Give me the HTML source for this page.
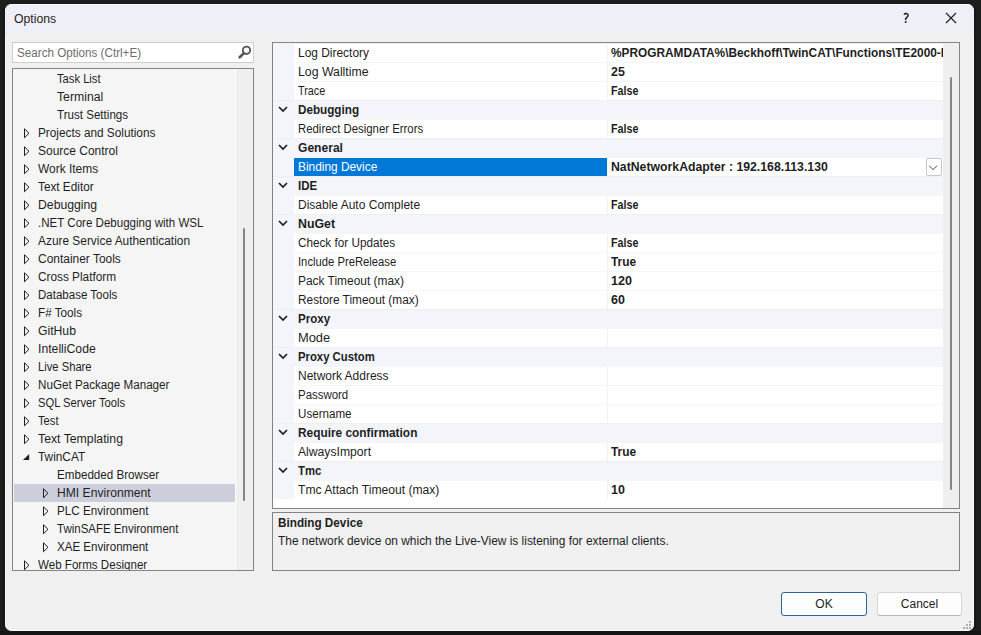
<!DOCTYPE html>
<html><head><meta charset="utf-8">
<style>
*{margin:0;padding:0;box-sizing:border-box}
html,body{width:981px;height:635px;overflow:hidden;background:#1c1d1d}
body{position:relative;font-family:"Liberation Sans",sans-serif;font-size:12px;color:#1e1e1e}
.a{position:absolute;white-space:nowrap}
.t{position:absolute;white-space:nowrap;line-height:18px;height:18px}
.tri{position:absolute}
.pr{position:absolute;white-space:nowrap;line-height:19px;height:19px}
b{font-weight:bold}
</style></head><body>

<div class="a" style="left:0;top:631px;width:981px;height:4px;background:#141414"></div>
<div class="a" style="left:3px;top:8px;width:2px;height:620px;background:#181818"></div>
<div class="a" style="left:974px;top:8px;width:2px;height:620px;background:#171717"></div>
<div class="a" style="left:5px;top:4px;width:969px;height:627px;border-radius:7px;background:#f0f0f0;overflow:hidden;box-shadow:inset 0 0 0 1px #fafafa">
<div class="a" style="left:0;top:0;width:969px;height:29px;background:#eff0f7"></div>
<div class="a" style="left:0;top:29px;width:969px;height:4px;background:linear-gradient(#eff0f5,#f0f0f0)"></div>
<div class="a" style="left:0;top:0;width:969px;height:1px;background:#f9f9fc"></div>
</div>
<div class="a" style="left:14px;top:12px;line-height:14px;transform:scaleX(1.0212);transform-origin:0 0;">Options</div>
<svg class="a" style="left:898px;top:9px" width="16" height="18"><path d="M6 5.6C6.6 4.7 7.5 4.4 8.4 4.5C9.7 4.7 10.3 5.8 10 6.9C9.7 8.1 7.7 8.7 7.6 10V11" stroke="#1a1a1a" stroke-width="1.45" fill="none"/><circle cx="7.7" cy="13" r="1" fill="#1a1a1a"/></svg>
<svg class="a" style="left:945px;top:12px" width="12" height="12"><path d="M1 1L11 11M11 1L1 11" stroke="#1a1a1a" stroke-width="1.1" fill="none"/></svg>
<div class="a" style="left:12px;top:42px;width:242px;height:21px;background:#fff;border:1px solid #cdcdcd"></div>
<div class="a" style="left:17px;top:46px;line-height:14px;color:#6d6d6d;transform:scaleX(0.9715);transform-origin:0 0;">Search Options (Ctrl+E)</div>
<svg class="a" style="left:236px;top:44px" width="16" height="16"><circle cx="10.5" cy="6.3" r="3.7" stroke="#555" stroke-width="1.9" fill="none"/><path d="M7.9 9.1L3.7 13.3" stroke="#555" stroke-width="2.7" stroke-linecap="round"/></svg>
<div class="a" style="left:12px;top:68px;width:242px;height:503px;background:#f5f5f5;border:1px solid #838383;overflow:hidden">
<div class="a" style="left:222px;top:0;width:1px;height:501px;background:#fcfcfc"></div>
<div class="a" style="left:223px;top:0;width:17px;height:501px;background:#efefef"></div>
<div class="a" style="left:230px;top:159px;width:2px;height:273px;background:#858585;border-radius:1px"></div>
<div class="a" style="left:1px;top:415px;width:221px;height:18px;background:#cccedb"></div>
<div class="t" style="left:44px;top:1px;transform:scaleX(0.9333);transform-origin:0 0;">Task List</div>
<div class="t" style="left:44px;top:19px;transform:scaleX(1.0202);transform-origin:0 0;">Terminal</div>
<div class="t" style="left:44px;top:37px;transform:scaleX(0.9658);transform-origin:0 0;">Trust Settings</div>
<div class="t" style="left:25px;top:55px;transform:scaleX(0.9831);transform-origin:0 0;">Projects and Solutions</div>
<svg class="tri" style="left:11px;top:59px" width="8" height="11"><path d="M0.5 0.8L0.5 9.7L5 5.25Z" stroke="#1e1e1e" stroke-width="1" fill="none"/></svg>
<div class="t" style="left:25px;top:73px;transform:scaleX(0.9979);transform-origin:0 0;">Source Control</div>
<svg class="tri" style="left:11px;top:77px" width="8" height="11"><path d="M0.5 0.8L0.5 9.7L5 5.25Z" stroke="#1e1e1e" stroke-width="1" fill="none"/></svg>
<div class="t" style="left:25px;top:91px;transform:scaleX(0.9951);transform-origin:0 0;">Work Items</div>
<svg class="tri" style="left:11px;top:95px" width="8" height="11"><path d="M0.5 0.8L0.5 9.7L5 5.25Z" stroke="#1e1e1e" stroke-width="1" fill="none"/></svg>
<div class="t" style="left:25px;top:109px;transform:scaleX(0.9811);transform-origin:0 0;">Text Editor</div>
<svg class="tri" style="left:11px;top:113px" width="8" height="11"><path d="M0.5 0.8L0.5 9.7L5 5.25Z" stroke="#1e1e1e" stroke-width="1" fill="none"/></svg>
<div class="t" style="left:25px;top:127px;transform:scaleX(1.0193);transform-origin:0 0;">Debugging</div>
<svg class="tri" style="left:11px;top:131px" width="8" height="11"><path d="M0.5 0.8L0.5 9.7L5 5.25Z" stroke="#1e1e1e" stroke-width="1" fill="none"/></svg>
<div class="t" style="left:25px;top:145px;transform:scaleX(0.9627);transform-origin:0 0;">.NET Core Debugging with WSL</div>
<svg class="tri" style="left:11px;top:149px" width="8" height="11"><path d="M0.5 0.8L0.5 9.7L5 5.25Z" stroke="#1e1e1e" stroke-width="1" fill="none"/></svg>
<div class="t" style="left:25px;top:163px;transform:scaleX(0.9908);transform-origin:0 0;">Azure Service Authentication</div>
<svg class="tri" style="left:11px;top:167px" width="8" height="11"><path d="M0.5 0.8L0.5 9.7L5 5.25Z" stroke="#1e1e1e" stroke-width="1" fill="none"/></svg>
<div class="t" style="left:25px;top:181px;transform:scaleX(0.9960);transform-origin:0 0;">Container Tools</div>
<svg class="tri" style="left:11px;top:185px" width="8" height="11"><path d="M0.5 0.8L0.5 9.7L5 5.25Z" stroke="#1e1e1e" stroke-width="1" fill="none"/></svg>
<div class="t" style="left:25px;top:199px;transform:scaleX(0.9830);transform-origin:0 0;">Cross Platform</div>
<svg class="tri" style="left:11px;top:203px" width="8" height="11"><path d="M0.5 0.8L0.5 9.7L5 5.25Z" stroke="#1e1e1e" stroke-width="1" fill="none"/></svg>
<div class="t" style="left:25px;top:217px;transform:scaleX(0.9605);transform-origin:0 0;">Database Tools</div>
<svg class="tri" style="left:11px;top:221px" width="8" height="11"><path d="M0.5 0.8L0.5 9.7L5 5.25Z" stroke="#1e1e1e" stroke-width="1" fill="none"/></svg>
<div class="t" style="left:25px;top:235px;transform:scaleX(0.9764);transform-origin:0 0;">F# Tools</div>
<svg class="tri" style="left:11px;top:239px" width="8" height="11"><path d="M0.5 0.8L0.5 9.7L5 5.25Z" stroke="#1e1e1e" stroke-width="1" fill="none"/></svg>
<div class="t" style="left:25px;top:253px;transform:scaleX(1.0148);transform-origin:0 0;">GitHub</div>
<svg class="tri" style="left:11px;top:257px" width="8" height="11"><path d="M0.5 0.8L0.5 9.7L5 5.25Z" stroke="#1e1e1e" stroke-width="1" fill="none"/></svg>
<div class="t" style="left:25px;top:271px;transform:scaleX(1.0189);transform-origin:0 0;">IntelliCode</div>
<svg class="tri" style="left:11px;top:275px" width="8" height="11"><path d="M0.5 0.8L0.5 9.7L5 5.25Z" stroke="#1e1e1e" stroke-width="1" fill="none"/></svg>
<div class="t" style="left:25px;top:289px;transform:scaleX(0.9338);transform-origin:0 0;">Live Share</div>
<svg class="tri" style="left:11px;top:293px" width="8" height="11"><path d="M0.5 0.8L0.5 9.7L5 5.25Z" stroke="#1e1e1e" stroke-width="1" fill="none"/></svg>
<div class="t" style="left:25px;top:307px;transform:scaleX(0.9707);transform-origin:0 0;">NuGet Package Manager</div>
<svg class="tri" style="left:11px;top:311px" width="8" height="11"><path d="M0.5 0.8L0.5 9.7L5 5.25Z" stroke="#1e1e1e" stroke-width="1" fill="none"/></svg>
<div class="t" style="left:25px;top:325px;transform:scaleX(0.9326);transform-origin:0 0;">SQL Server Tools</div>
<svg class="tri" style="left:11px;top:329px" width="8" height="11"><path d="M0.5 0.8L0.5 9.7L5 5.25Z" stroke="#1e1e1e" stroke-width="1" fill="none"/></svg>
<div class="t" style="left:25px;top:343px;transform:scaleX(0.9316);transform-origin:0 0;">Test</div>
<svg class="tri" style="left:11px;top:347px" width="8" height="11"><path d="M0.5 0.8L0.5 9.7L5 5.25Z" stroke="#1e1e1e" stroke-width="1" fill="none"/></svg>
<div class="t" style="left:25px;top:361px;transform:scaleX(1.0217);transform-origin:0 0;">Text Templating</div>
<svg class="tri" style="left:11px;top:365px" width="8" height="11"><path d="M0.5 0.8L0.5 9.7L5 5.25Z" stroke="#1e1e1e" stroke-width="1" fill="none"/></svg>
<div class="t" style="left:25px;top:379px;transform:scaleX(0.9877);transform-origin:0 0;">TwinCAT</div>
<svg class="tri" style="left:9px;top:383px" width="9" height="10"><path d="M1 8L7.2 2L7.2 8Z" fill="#1e1e1e"/></svg>
<div class="t" style="left:44px;top:397px;transform:scaleX(0.9690);transform-origin:0 0;">Embedded Browser</div>
<div class="t" style="left:44px;top:415px;transform:scaleX(1.0097);transform-origin:0 0;">HMI Environment</div>
<svg class="tri" style="left:30px;top:419px" width="8" height="11"><path d="M0.5 0.8L0.5 9.7L5 5.25Z" stroke="#1e1e1e" stroke-width="1" fill="none"/></svg>
<div class="t" style="left:44px;top:433px;transform:scaleX(0.9731);transform-origin:0 0;">PLC Environment</div>
<svg class="tri" style="left:30px;top:437px" width="8" height="11"><path d="M0.5 0.8L0.5 9.7L5 5.25Z" stroke="#1e1e1e" stroke-width="1" fill="none"/></svg>
<div class="t" style="left:44px;top:451px;transform:scaleX(0.9581);transform-origin:0 0;">TwinSAFE Environment</div>
<svg class="tri" style="left:30px;top:455px" width="8" height="11"><path d="M0.5 0.8L0.5 9.7L5 5.25Z" stroke="#1e1e1e" stroke-width="1" fill="none"/></svg>
<div class="t" style="left:44px;top:469px;transform:scaleX(0.9640);transform-origin:0 0;">XAE Environment</div>
<svg class="tri" style="left:30px;top:473px" width="8" height="11"><path d="M0.5 0.8L0.5 9.7L5 5.25Z" stroke="#1e1e1e" stroke-width="1" fill="none"/></svg>
<div class="t" style="left:25px;top:487px;transform:scaleX(0.9653);transform-origin:0 0;">Web Forms Designer</div>
<svg class="tri" style="left:11px;top:491px" width="8" height="11"><path d="M0.5 0.8L0.5 9.7L5 5.25Z" stroke="#1e1e1e" stroke-width="1" fill="none"/></svg>
</div>
<div class="a" style="left:272px;top:42px;width:688px;height:467px;background:#fff;border:1px solid #838383;overflow:hidden">
<div class="a" style="left:0;top:0;width:21px;height:456px;background:#f3f5fa"></div>
<div class="a" style="left:670px;top:0;width:16px;height:465px;background:#efefef"></div>
<div class="a" style="left:677px;top:34px;width:2px;height:413px;background:#858585;border-radius:1px"></div>
<div class="a" style="left:21px;top:0px;width:649px;height:1px;background:#f5f5f5"></div>
<div class="a" style="left:334px;top:0px;width:1px;height:19px;background:#f2f2f2"></div>
<div class="pr" style="left:25px;top:1px;transform:scaleX(0.9947);transform-origin:0 0;">Log Directory</div>
<div class="a" style="left:335px;top:0px;width:335px;height:19px;overflow:hidden"><div class="pr" style="left:3px;top:1px;transform:scaleX(0.9880);transform-origin:0 0;"><b>%PROGRAMDATA%\Beckhoff\TwinCAT\Functions\TE2000-HMI-Engineering\Infrastructure</b></div></div>
<div class="a" style="left:21px;top:19px;width:649px;height:1px;background:#f5f5f5"></div>
<div class="a" style="left:334px;top:19px;width:1px;height:19px;background:#f2f2f2"></div>
<div class="pr" style="left:25px;top:20px;transform:scaleX(1.0240);transform-origin:0 0;">Log Walltime</div>
<div class="a" style="left:335px;top:19px;width:335px;height:19px;overflow:hidden"><div class="pr" style="left:3px;top:1px;transform:scaleX(1.0353);transform-origin:0 0;"><b>25</b></div></div>
<div class="a" style="left:21px;top:38px;width:649px;height:1px;background:#f5f5f5"></div>
<div class="a" style="left:334px;top:38px;width:1px;height:19px;background:#f2f2f2"></div>
<div class="pr" style="left:25px;top:39px;transform:scaleX(0.9026);transform-origin:0 0;">Trace</div>
<div class="a" style="left:335px;top:38px;width:335px;height:19px;overflow:hidden"><div class="pr" style="left:3px;top:1px;transform:scaleX(0.8939);transform-origin:0 0;"><b>False</b></div></div>
<div class="a" style="left:0;top:57px;width:670px;height:19px;background:#f3f5fa;border-top:1px solid #efeff3"></div>
<svg class="a" style="left:5px;top:63px" width="10" height="7"><path d="M1 1L5 5L9 1" stroke="#1e1e1e" stroke-width="1.7" fill="none"/></svg>
<div class="pr" style="left:25px;top:58px;transform:scaleX(0.9743);transform-origin:0 0;"><b>Debugging</b></div>
<div class="a" style="left:21px;top:76px;width:649px;height:1px;background:#f5f5f5"></div>
<div class="a" style="left:334px;top:76px;width:1px;height:19px;background:#f2f2f2"></div>
<div class="pr" style="left:25px;top:77px;transform:scaleX(0.9476);transform-origin:0 0;">Redirect Designer Errors</div>
<div class="a" style="left:335px;top:76px;width:335px;height:19px;overflow:hidden"><div class="pr" style="left:3px;top:1px;transform:scaleX(0.8939);transform-origin:0 0;"><b>False</b></div></div>
<div class="a" style="left:0;top:95px;width:670px;height:19px;background:#f3f5fa;border-top:1px solid #efeff3"></div>
<svg class="a" style="left:5px;top:101px" width="10" height="7"><path d="M1 1L5 5L9 1" stroke="#1e1e1e" stroke-width="1.7" fill="none"/></svg>
<div class="pr" style="left:25px;top:96px;transform:scaleX(1.0056);transform-origin:0 0;"><b>General</b></div>
<div class="a" style="left:21px;top:114px;width:649px;height:1px;background:#f5f5f5"></div>
<div class="a" style="left:334px;top:114px;width:1px;height:19px;background:#f2f2f2"></div>
<div class="a" style="left:21px;top:115px;width:313px;height:18px;background:#0078d7"></div>
<div class="pr" style="left:25px;top:115px;color:#fff;transform:scaleX(0.9899);transform-origin:0 0;">Binding Device</div>
<div class="a" style="left:335px;top:114px;width:335px;height:19px;overflow:hidden"><div class="pr" style="left:3px;top:1px;transform:scaleX(1.0222);transform-origin:0 0;"><b>NatNetworkAdapter : 192.168.113.130</b></div></div>
<div class="a" style="left:653px;top:115px;width:16px;height:18px;border:1px solid #c8c8c8;border-radius:2px;background:#fff"></div>
<svg class="a" style="left:655px;top:120px" width="11" height="8"><path d="M1 2.7L5 6.6L9 2.7" stroke="#4a4a4a" stroke-width="1" fill="none"/></svg>
<div class="a" style="left:0;top:133px;width:670px;height:19px;background:#f3f5fa;border-top:1px solid #efeff3"></div>
<svg class="a" style="left:5px;top:139px" width="10" height="7"><path d="M1 1L5 5L9 1" stroke="#1e1e1e" stroke-width="1.7" fill="none"/></svg>
<div class="pr" style="left:25px;top:134px;transform:scaleX(0.9587);transform-origin:0 0;"><b>IDE</b></div>
<div class="a" style="left:21px;top:152px;width:649px;height:1px;background:#f5f5f5"></div>
<div class="a" style="left:334px;top:152px;width:1px;height:19px;background:#f2f2f2"></div>
<div class="pr" style="left:25px;top:153px;">Disable Auto Complete</div>
<div class="a" style="left:335px;top:152px;width:335px;height:19px;overflow:hidden"><div class="pr" style="left:3px;top:1px;transform:scaleX(0.8939);transform-origin:0 0;"><b>False</b></div></div>
<div class="a" style="left:0;top:171px;width:670px;height:19px;background:#f3f5fa;border-top:1px solid #efeff3"></div>
<svg class="a" style="left:5px;top:177px" width="10" height="7"><path d="M1 1L5 5L9 1" stroke="#1e1e1e" stroke-width="1.7" fill="none"/></svg>
<div class="pr" style="left:25px;top:172px;transform:scaleX(1.0294);transform-origin:0 0;"><b>NuGet</b></div>
<div class="a" style="left:21px;top:190px;width:649px;height:1px;background:#f5f5f5"></div>
<div class="a" style="left:334px;top:190px;width:1px;height:19px;background:#f2f2f2"></div>
<div class="pr" style="left:25px;top:191px;transform:scaleX(0.9768);transform-origin:0 0;">Check for Updates</div>
<div class="a" style="left:335px;top:190px;width:335px;height:19px;overflow:hidden"><div class="pr" style="left:3px;top:1px;transform:scaleX(0.8939);transform-origin:0 0;"><b>False</b></div></div>
<div class="a" style="left:21px;top:209px;width:649px;height:1px;background:#f5f5f5"></div>
<div class="a" style="left:334px;top:209px;width:1px;height:19px;background:#f2f2f2"></div>
<div class="pr" style="left:25px;top:210px;transform:scaleX(0.9373);transform-origin:0 0;">Include PreRelease</div>
<div class="a" style="left:335px;top:209px;width:335px;height:19px;overflow:hidden"><div class="pr" style="left:3px;top:1px;transform:scaleX(0.9911);transform-origin:0 0;"><b>True</b></div></div>
<div class="a" style="left:21px;top:228px;width:649px;height:1px;background:#f5f5f5"></div>
<div class="a" style="left:334px;top:228px;width:1px;height:19px;background:#f2f2f2"></div>
<div class="pr" style="left:25px;top:229px;transform:scaleX(0.9936);transform-origin:0 0;">Pack Timeout (max)</div>
<div class="a" style="left:335px;top:228px;width:335px;height:19px;overflow:hidden"><div class="pr" style="left:3px;top:1px;transform:scaleX(1.0467);transform-origin:0 0;"><b>120</b></div></div>
<div class="a" style="left:21px;top:247px;width:649px;height:1px;background:#f5f5f5"></div>
<div class="a" style="left:334px;top:247px;width:1px;height:19px;background:#f2f2f2"></div>
<div class="pr" style="left:25px;top:248px;transform:scaleX(0.9886);transform-origin:0 0;">Restore Timeout (max)</div>
<div class="a" style="left:335px;top:247px;width:335px;height:19px;overflow:hidden"><div class="pr" style="left:3px;top:1px;transform:scaleX(1.0374);transform-origin:0 0;"><b>60</b></div></div>
<div class="a" style="left:0;top:266px;width:670px;height:19px;background:#f3f5fa;border-top:1px solid #efeff3"></div>
<svg class="a" style="left:5px;top:272px" width="10" height="7"><path d="M1 1L5 5L9 1" stroke="#1e1e1e" stroke-width="1.7" fill="none"/></svg>
<div class="pr" style="left:25px;top:267px;transform:scaleX(0.9664);transform-origin:0 0;"><b>Proxy</b></div>
<div class="a" style="left:21px;top:285px;width:649px;height:1px;background:#f5f5f5"></div>
<div class="a" style="left:334px;top:285px;width:1px;height:19px;background:#f2f2f2"></div>
<div class="pr" style="left:25px;top:286px;transform:scaleX(1.0718);transform-origin:0 0;">Mode</div>
<div class="a" style="left:0;top:304px;width:670px;height:19px;background:#f3f5fa;border-top:1px solid #efeff3"></div>
<svg class="a" style="left:5px;top:310px" width="10" height="7"><path d="M1 1L5 5L9 1" stroke="#1e1e1e" stroke-width="1.7" fill="none"/></svg>
<div class="pr" style="left:25px;top:305px;transform:scaleX(0.9433);transform-origin:0 0;"><b>Proxy Custom</b></div>
<div class="a" style="left:21px;top:323px;width:649px;height:1px;background:#f5f5f5"></div>
<div class="a" style="left:334px;top:323px;width:1px;height:19px;background:#f2f2f2"></div>
<div class="pr" style="left:25px;top:324px;transform:scaleX(0.9979);transform-origin:0 0;">Network Address</div>
<div class="a" style="left:21px;top:342px;width:649px;height:1px;background:#f5f5f5"></div>
<div class="a" style="left:334px;top:342px;width:1px;height:19px;background:#f2f2f2"></div>
<div class="pr" style="left:25px;top:343px;transform:scaleX(0.9531);transform-origin:0 0;">Password</div>
<div class="a" style="left:21px;top:361px;width:649px;height:1px;background:#f5f5f5"></div>
<div class="a" style="left:334px;top:361px;width:1px;height:19px;background:#f2f2f2"></div>
<div class="pr" style="left:25px;top:362px;transform:scaleX(0.9666);transform-origin:0 0;">Username</div>
<div class="a" style="left:0;top:380px;width:670px;height:19px;background:#f3f5fa;border-top:1px solid #efeff3"></div>
<svg class="a" style="left:5px;top:386px" width="10" height="7"><path d="M1 1L5 5L9 1" stroke="#1e1e1e" stroke-width="1.7" fill="none"/></svg>
<div class="pr" style="left:25px;top:381px;transform:scaleX(0.9892);transform-origin:0 0;"><b>Require confirmation</b></div>
<div class="a" style="left:21px;top:399px;width:649px;height:1px;background:#f5f5f5"></div>
<div class="a" style="left:334px;top:399px;width:1px;height:19px;background:#f2f2f2"></div>
<div class="pr" style="left:25px;top:400px;transform:scaleX(1.0140);transform-origin:0 0;">AlwaysImport</div>
<div class="a" style="left:335px;top:399px;width:335px;height:19px;overflow:hidden"><div class="pr" style="left:3px;top:1px;transform:scaleX(0.9911);transform-origin:0 0;"><b>True</b></div></div>
<div class="a" style="left:0;top:418px;width:670px;height:19px;background:#f3f5fa;border-top:1px solid #efeff3"></div>
<svg class="a" style="left:5px;top:424px" width="10" height="7"><path d="M1 1L5 5L9 1" stroke="#1e1e1e" stroke-width="1.7" fill="none"/></svg>
<div class="pr" style="left:25px;top:419px;transform:scaleX(0.9441);transform-origin:0 0;"><b>Tmc</b></div>
<div class="a" style="left:21px;top:437px;width:649px;height:1px;background:#f5f5f5"></div>
<div class="a" style="left:334px;top:437px;width:1px;height:19px;background:#f2f2f2"></div>
<div class="pr" style="left:25px;top:438px;transform:scaleX(1.0096);transform-origin:0 0;">Tmc Attach Timeout (max)</div>
<div class="a" style="left:335px;top:437px;width:335px;height:19px;overflow:hidden"><div class="pr" style="left:3px;top:1px;transform:scaleX(1.0405);transform-origin:0 0;"><b>10</b></div></div>
</div>
<div class="a" style="left:272px;top:512px;width:688px;height:59px;background:#f0f0f0;border:1px solid #838383"></div>
<div class="a" style="left:278px;top:516px;line-height:14px;transform:scaleX(0.9768);transform-origin:0 0;"><b>Binding Device</b></div>
<div class="a" style="left:278px;top:534px;line-height:14px;transform:scaleX(0.9934);transform-origin:0 0;">The network device on which the Live-View is listening for external clients.</div>
<div class="a" style="left:781px;top:592px;width:86px;height:24px;border:1px solid #2e6193;border-radius:3px;background:#fcfdfe;text-align:center;line-height:22px">OK</div>
<div class="a" style="left:877px;top:592px;width:85px;height:24px;border:1px solid #d5d5d5;border-bottom-color:#b8b8b8;border-radius:3px;background:#fdfdfd;text-align:center;line-height:22px">Cancel</div>
<div class="a" style="left:969px;top:621px;width:2px;height:2px;background:#b2b2b2"></div>
<div class="a" style="left:966px;top:624px;width:2px;height:2px;background:#b2b2b2"></div>
<div class="a" style="left:969px;top:624px;width:2px;height:2px;background:#b2b2b2"></div>
<div class="a" style="left:963px;top:627px;width:2px;height:2px;background:#b2b2b2"></div>
<div class="a" style="left:966px;top:627px;width:2px;height:2px;background:#b2b2b2"></div>
<div class="a" style="left:969px;top:627px;width:2px;height:2px;background:#b2b2b2"></div>
</body></html>
